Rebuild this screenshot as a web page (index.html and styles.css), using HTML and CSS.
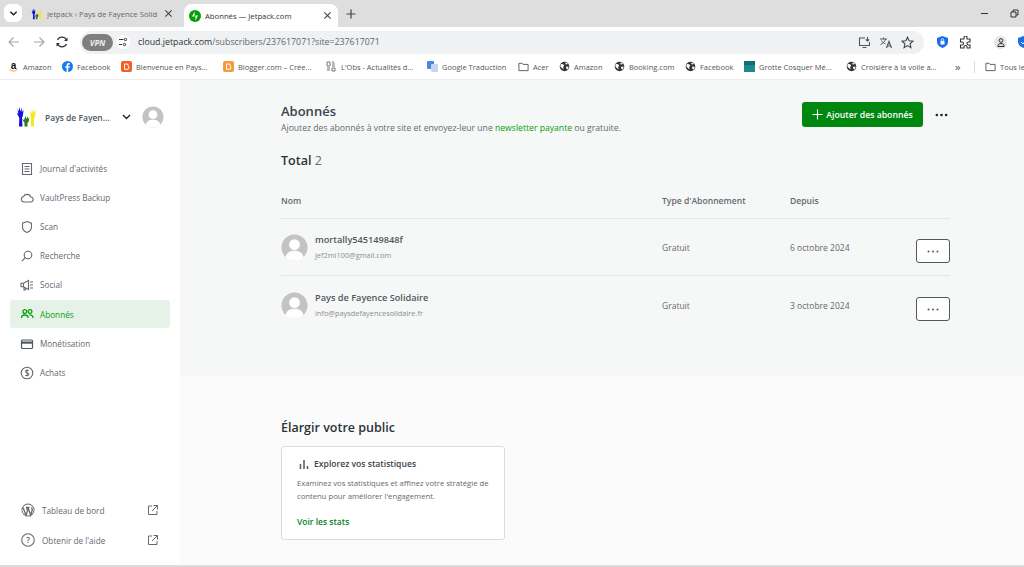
FILE: index.html
```html
<!DOCTYPE html>
<html lang="fr">
<head>
<meta charset="utf-8">
<title>Abonnés — Jetpack.com</title>
<link rel="stylesheet" href="styles.css">
</head>
<body>
<svg class="defs" width="0" height="0" aria-hidden="true">
  <symbol id="globe" viewBox="0 0 12 12"><circle cx="6" cy="6" r="5.2" fill="#333"/><path d="M2 3.2l2.6.4 1.2 1.6-1.4 1.4.8 2.6L3.4 8 1.4 6zM7 1.5l2.6 1-1 1.4-1.6-.4zM8 6l2.6.2-1.2 3L7.6 8z" fill="#fff"/></symbol>
  <symbol id="folder" viewBox="0 0 12 12"><path d="M1 2.5h3.5l1 1.2H11V10.5H1z" fill="none" stroke="#555" stroke-width="1"/></symbol>
  <symbol id="ext" viewBox="0 0 12 12"><path d="M5 2H1.500v8.500H10V7M6.500 1.500H10.500V5.500M10.500 1.500L5 7" fill="none" stroke="#646970" stroke-width="1"/></symbol>
  <symbol id="avatar" viewBox="0 0 28 28"><circle cx="14" cy="14" r="13.5" fill="#c3c3c3"/><circle cx="14" cy="11" r="5.6" fill="#fff"/><path d="M4.5 24c1.500-5 5-6.600 9.500-6.600S22 19 23.500 24A13.500 13.500 0 0 1 14 27.500 13.500 13.500 0 0 1 4.500 24z" fill="#fff"/></symbol>
  <symbol id="x" viewBox="0 0 10 10"><path d="M1.500 1.500l7 7M8.500 1.500l-7 7" stroke="#444" stroke-width="1.200" fill="none"/></symbol>
  <symbol id="hands" viewBox="0 0 22 20"><path d="M2 1l1.200 3.500L4 0l1 4.500L6.500.5 6.200 5 8 3 7.500 8 6.500 11 7 19.500H3.500L3.800 11 1 5.500 2.800 7z" fill="#1010e0"/><path d="M10 9l1 3 1-3 .5 3 1.200-2-.2 4-1.500 2v3.500h-3V16l-2.500-4 2 1z" fill="#2f7d1e"/><path d="M16.500 2l.5 4L18 1.500 18.500 6 20.500 3l-1 6-1 3V19.500H15.500V12l-.5-4-1-3 1.500 2z" fill="#f2ea1e"/></symbol>
</svg>

<header class="chrome">
  <div class="tabstrip">
    <button class="tab-search"><svg viewBox="0 0 10 10" width="9" height="9"><path d="M1.500 3l3.500 3.500L8.500 3" fill="none" stroke="#222" stroke-width="1.500"/></svg></button>
    <div class="tab">
      <svg class="tab-icon" width="12" height="12"><use href="#hands"/></svg>
      <span class="tab-title">Jetpack ‹ Pays de Fayence Solid</span>
      <svg class="tab-x" width="9" height="9"><use href="#x"/></svg>
    </div>
    <div class="tab tab-active">
      <svg class="tab-icon" width="12" height="12" viewBox="0 0 12 12"><circle cx="6" cy="6" r="6" fill="#069e08"/><path d="M5.600 1.500v5H3zM6.400 10.500v-5H9z" fill="#fff"/></svg>
      <span class="tab-title">Abonnés — Jetpack.com</span>
      <svg class="tab-x" width="9" height="9"><use href="#x"/></svg>
    </div>
    <svg class="tab-new" width="10" height="10" viewBox="0 0 10 10"><path d="M5 .5v9M.5 5h9" stroke="#444" stroke-width="1.200"/></svg>
    <div class="win-controls">
      <span class="win-min"></span>
      <svg width="9" height="9" viewBox="0 0 9 9"><path d="M1 3h5v5H1zM3 3V1h5v5H6" fill="none" stroke="#333"/></svg>
    </div>
  </div>
  <div class="toolbar">
    <svg class="nav-icon" width="12" height="12" viewBox="0 0 12 12"><path d="M11 6H1.500M5.500 1.500L1 6l4.500 4.500" fill="none" stroke="#a5a5a5" stroke-width="1.100"/></svg>
    <svg class="nav-icon" width="12" height="12" viewBox="0 0 12 12"><path d="M1 6h9.500M6.500 1.500L11 6l-4.500 4.500" fill="none" stroke="#a5a5a5" stroke-width="1.100"/></svg>
    <svg class="nav-icon" width="12" height="12" viewBox="0 0 12 12"><path d="M10.500 4A5 5 0 0 0 1.500 4M1.500 8a5 5 0 0 0 9 0" fill="none" stroke="#333" stroke-width="1.200"/><path d="M11.500 1.500V5H8zM.5 10.500V7H4z" fill="#333"/></svg>
    <div class="omnibox">
      <span class="vpn">VPN</span>
      <span class="site-info"><svg width="10" height="10" viewBox="0 0 10 10"><path d="M1 2.500h4.500M1 7.500h3" stroke="#333"/><circle cx="7.500" cy="2.500" r="1.200" fill="none" stroke="#333"/><circle cx="6.500" cy="7.500" r="1.200" fill="none" stroke="#333"/></svg></span>
      <span class="url"><b>cloud.jetpack.com</b>/subscribers/237617071?site=237617071</span>
      <div class="omni-icons">
        <svg width="13" height="13" viewBox="0 0 13 13"><path d="M7 2H1.500v7.500h10V6M4.500 11.500h4M9.500 1v4M7.800 3.500L9.500 5l1.700-1.500" fill="none" stroke="#555" stroke-width="1.100"/></svg>
        <svg width="14" height="13" viewBox="0 0 14 13"><path d="M1 3h7M4.500 1.500V3M6.500 3C6 5.500 4 7.500 1.500 8.500M2.500 4.500C3.500 6.500 5 7.500 6.500 8" fill="none" stroke="#555"/><path d="M7.500 12l2.500-6.500L12.500 12M8.400 10h3.200" fill="none" stroke="#555" stroke-width="1.200"/></svg>
        <svg width="13" height="13" viewBox="0 0 13 13"><path d="M6.500 1.200l1.600 3.600 3.900.4-2.900 2.600.8 3.800-3.400-2-3.400 2 .8-3.800L1 5.200l3.900-.4z" fill="none" stroke="#444" stroke-width="1.100"/></svg>
      </div>
    </div>
    <svg class="ext-shield" width="11" height="12" viewBox="0 0 11 12"><path d="M5.500 0L11 2v4c0 3-2.500 5-5.500 6C2.500 11 0 9 0 6V2z" fill="#1a6fe8"/><rect x="3.500" y="5" width="4" height="3.500" fill="#fff"/><path d="M4.300 5V3.800a1.200 1.200 0 0 1 2.400 0V5" fill="none" stroke="#fff" stroke-width=".8"/></svg>
    <svg class="ext-puzzle" width="13" height="13" viewBox="0 0 13 13"><path d="M5 1.500a1.500 1.500 0 0 1 3 0V3h3v3H9.500a1.500 1.500 0 0 0 0 3H11v3H8v-1a1.500 1.500 0 0 0-3 0v1H1.500V9H3a1.500 1.500 0 0 0 0-3H1.500V3H5z" fill="none" stroke="#333" stroke-width="1.100"/></svg>
    <span class="tool-sep"></span>
    <span class="profile"><svg width="8" height="9" viewBox="0 0 8 9"><circle cx="4" cy="2.500" r="1.800" fill="none" stroke="#333"/><path d="M.8 8.500c0-4 6.400-4 6.400 0z" fill="none" stroke="#333"/></svg></span>
    <svg class="ext-last" width="11" height="12" viewBox="0 0 11 12"><path d="M5.500 0L11 2v4c0 3-2.500 5-5.500 6C2.500 11 0 9 0 6V2z" fill="#1a6fe8"/><path d="M3 6l2 2 3-4" stroke="#fff" fill="none"/></svg>
  </div>
  <nav class="bookmarks">
    <span class="bm bm-amazon"><svg width="11" height="11" viewBox="0 0 11 11"><text x="5.500" y="8" text-anchor="middle" class="amazon-a">a</text><path d="M1.500 8.500c2.500 2 5.500 2 8 0" stroke="#f90" fill="none"/></svg>Amazon</span>
    <span class="bm bm-fb"><svg width="11" height="11" viewBox="0 0 11 11"><circle cx="5.500" cy="5.500" r="5.500" fill="#1877f2"/><path d="M6.200 11V6.800h1.400l.3-1.600H6.200V4.300c0-.6.300-.9.900-.9h.8V2c-1.700-.3-3.300.1-3.300 2.100v1.100H3.300v1.600h1.300V11z" fill="#fff"/></svg>Facebook</span>
    <span class="bm bm-blog"><svg width="11" height="11" viewBox="0 0 11 11"><rect width="11" height="11" rx="2" fill="#f4601e"/><path d="M3.500 3h2.500a1.200 1.200 0 0 1 1.200 1.500v1h.5v2A.8.8 0 0 1 7 8.300H3.500z" fill="none" stroke="#fff"/></svg>Bienvenue en Pays...</span>
    <span class="bm bm-blogger"><svg width="11" height="11" viewBox="0 0 11 11"><rect width="11" height="11" rx="2" fill="#f59a3b"/><path d="M3.500 3h2.500a1.200 1.200 0 0 1 1.200 1.500v1h.5v2A.8.8 0 0 1 7 8.300H3.500z" fill="none" stroke="#fff"/></svg>Blogger.com – Crée...</span>
    <span class="bm bm-obs"><svg width="11" height="11" viewBox="0 0 11 11"><path d="M1 1h3v4H1zM6 1h2M6 3h3M6 5h3M1 7h3M1 9h3M6 7h3v3H6z" fill="none" stroke="#777"/></svg>L'Obs - Actualités d...</span>
    <span class="bm bm-gt"><svg width="11" height="11" viewBox="0 0 11 11"><rect y="0" width="7" height="8" rx="1" fill="#4a86e8"/><rect x="4" y="3" width="7" height="8" rx="1" fill="#c6d6f2"/></svg>Google Traduction</span>
    <span class="bm bm-acer"><svg width="11" height="11"><use href="#folder"/></svg>Acer</span>
    <span class="bm bm-am2"><svg width="11" height="11"><use href="#globe"/></svg>Amazon</span>
    <span class="bm bm-bk"><svg width="11" height="11"><use href="#globe"/></svg>Booking.com</span>
    <span class="bm bm-fb2"><svg width="11" height="11"><use href="#globe"/></svg>Facebook</span>
    <span class="bm bm-grotte"><svg width="11" height="11" viewBox="0 0 11 11"><rect width="11" height="11" fill="#1e8a90"/><rect width="11" height="4" fill="#0f6f74"/></svg>Grotte Cosquer Mé...</span>
    <span class="bm bm-cr"><svg width="11" height="11"><use href="#globe"/></svg>Croisière à la voile a...</span>
    <span class="bm-more">»</span>
    <span class="bm-sep"></span>
    <span class="bm bm-all"><svg width="11" height="11"><use href="#folder"/></svg>Tous les favoris</span>
  </nav>
</header>

<div class="app">
  <aside class="sidebar">
    <div class="site-head">
      <svg class="site-logo" width="23" height="20"><use href="#hands"/></svg>
      <span class="site-name">Pays de Fayen...</span>
      <svg class="site-chev" width="9" height="6" viewBox="0 0 9 6"><path d="M1 1l3.500 3.500L8 1" fill="none" stroke="#222" stroke-width="1.400"/></svg>
      <svg width="22" height="22"><use href="#avatar"/></svg>
    </div>
    <ul class="menu">
      <li class="menu-item"><svg class="mi" viewBox="0 0 14 14"><path d="M2.500 1.500h9v11h-9zM4.500 4.500h5M4.500 7h5M4.500 9.500h5" fill="none" stroke="#646970" stroke-width="1.100"/></svg>Journal d'activités</li>
      <li class="menu-item"><svg class="mi" viewBox="0 0 14 14"><path d="M4 11h6.500a2.500 2.500 0 0 0 .3-5A4 4 0 0 0 3.500 5.500 2.800 2.800 0 0 0 4 11z" fill="none" stroke="#646970" stroke-width="1.100"/></svg>VaultPress Backup</li>
      <li class="menu-item"><svg class="mi" viewBox="0 0 14 14"><path d="M7 1.500l4.500 1.700v3.800c0 2.800-2 4.500-4.500 5.500-2.500-1-4.500-2.700-4.500-5.500V3.200z" fill="none" stroke="#646970" stroke-width="1.100"/></svg>Scan</li>
      <li class="menu-item"><svg class="mi" viewBox="0 0 14 14"><circle cx="8" cy="6" r="3.800" fill="none" stroke="#646970" stroke-width="1.100"/><path d="M5.300 8.700L2 12" stroke="#646970" stroke-width="1.100"/></svg>Recherche</li>
      <li class="menu-item"><svg class="mi" viewBox="0 0 14 14"><path d="M1 5.200h2.500L8.500 2.500v9L3.500 8.800H1zM3.500 5.200v3.600M4 9v3h1.500V9.600M10 4h3M10 7h3M10 10h3" fill="none" stroke="#646970" stroke-width="1.100"/></svg>Social</li>
      <li class="menu-item menu-active"><svg class="mi" viewBox="0 0 14 14"><circle cx="4.800" cy="4.500" r="1.900" fill="none" stroke="#069e08" stroke-width="1.300"/><circle cx="10" cy="4.500" r="1.900" fill="none" stroke="#069e08" stroke-width="1.300"/><path d="M1.500 11c0-4 6.600-4 6.600 0M9.500 8c2-.3 3.500.8 3.500 3" fill="none" stroke="#069e08" stroke-width="1.300"/></svg>Abonnés</li>
      <li class="menu-item"><svg class="mi" viewBox="0 0 14 14"><rect x="1.500" y="3" width="11" height="8.500" rx="1" fill="none" stroke="#50575e" stroke-width="1.200"/><rect x="1.500" y="4.500" width="11" height="2.200" fill="#50575e"/></svg>Monétisation</li>
      <li class="menu-item"><svg class="mi" viewBox="0 0 14 14"><circle cx="7" cy="7" r="5.800" fill="none" stroke="#646970" stroke-width="1.100"/><text x="7" y="9.800" text-anchor="middle" class="dollar">$</text></svg>Achats</li>
    </ul>
    <div class="side-foot">
      <div class="foot-item"><svg class="fi" viewBox="0 0 14 14"><circle cx="7" cy="7" r="6.500" fill="#646970"/><circle cx="7" cy="7" r="5.600" fill="#fff"/><path d="M2 4.500L5 12.300 6.600 7.800 5.500 4.500M5 4.500h3.500M7 4.500l2.700 7.800 1.500-5c.3-1.200-.2-2-.8-2.800" fill="none" stroke="#646970" stroke-width="1.300"/></svg><span class="foot-label">Tableau de bord</span><svg class="fe"><use href="#ext"/></svg></div>
      <div class="foot-item"><svg class="fi" viewBox="0 0 14 14"><circle cx="7" cy="7" r="6.300" fill="none" stroke="#646970" stroke-width="1.100"/><text x="7" y="10" text-anchor="middle" class="qm">?</text></svg><span class="foot-label">Obtenir de l'aide</span><svg class="fe"><use href="#ext"/></svg></div>
    </div>
  </aside>

  <main class="content">
    <section class="panel">
      <div class="panel-inner">
        <div class="page-head">
          <div>
            <h1 class="page-title">Abonnés</h1>
            <p class="page-sub">Ajoutez des abonnés à votre site et envoyez-leur une <a class="link">newsletter payante</a> ou gratuite.</p>
          </div>
          <div class="head-actions">
            <button class="btn-add"><svg width="11" height="11" viewBox="0 0 11 11"><path d="M5.500 .5v10M.5 5.500h10" stroke="#fff" stroke-width="1.100"/></svg>Ajouter des abonnés</button>
            <svg class="head-more" width="13" height="4" viewBox="0 0 14 4"><circle cx="2" cy="2" r="1.400" fill="#1d2327"/><circle cx="7" cy="2" r="1.400" fill="#1d2327"/><circle cx="12" cy="2" r="1.400" fill="#1d2327"/></svg>
          </div>
        </div>
        <h2 class="total">Total <span class="total-n">2</span></h2>
        <div class="row row-head">
          <span class="c-name">Nom</span><span class="c-type">Type d'Abonnement</span><span class="c-since">Depuis</span>
        </div>
        <div class="row row-sub">
          <div class="c-name sub-id">
            <svg width="27" height="27"><use href="#avatar"/></svg>
            <div><div class="sub-name">mortally545149848f</div><div class="sub-mail">jef2mi100@gmail.com</div></div>
          </div>
          <span class="c-type">Gratuit</span><span class="c-since">6 octobre 2024</span>
          <button class="btn-more"><svg width="12" height="3" viewBox="0 0 12 3"><circle cx="1.500" cy="1.500" r="1" fill="#50575e"/><circle cx="6" cy="1.500" r="1" fill="#50575e"/><circle cx="10.500" cy="1.500" r="1" fill="#50575e"/></svg></button>
        </div>
        <div class="row row-sub row-last">
          <div class="c-name sub-id">
            <svg width="27" height="27"><use href="#avatar"/></svg>
            <div><div class="sub-name">Pays de Fayence Solidaire</div><div class="sub-mail">info@paysdefayencesolidaire.fr</div></div>
          </div>
          <span class="c-type">Gratuit</span><span class="c-since">3 octobre 2024</span>
          <button class="btn-more"><svg width="12" height="3" viewBox="0 0 12 3"><circle cx="1.500" cy="1.500" r="1" fill="#50575e"/><circle cx="6" cy="1.500" r="1" fill="#50575e"/><circle cx="10.500" cy="1.500" r="1" fill="#50575e"/></svg></button>
        </div>
      </div>
    </section>
    <section class="grow">
      <h2 class="grow-title">Élargir votre public</h2>
      <div class="card">
        <div class="card-head"><svg width="12" height="12" viewBox="0 0 12 12"><path d="M2.500 6v5M6 2v9M9.500 8v3" stroke="#50575e" stroke-width="1.500"/></svg><span>Explorez vos statistiques</span></div>
        <p class="card-text">Examinez vos statistiques et affinez votre stratégie de contenu pour améliorer l'engagement.</p>
        <a class="card-link">Voir les stats</a>
      </div>
    </section>
  </main>
</div>
</body>
</html>
```
FILE: styles.css
```css
* { box-sizing: border-box; }
html, body { margin: 0; padding: 0; }
body { width: 1024px; height: 567px; overflow: hidden; background: #fff; font-family: "Open Sans", "Noto Sans", sans-serif; color: #50575e; display: flex; flex-direction: column; }
.defs { position: absolute; }
button { font-family: inherit; border: 0; padding: 0; background: none; }
svg { display: block; flex: none; }

.chrome { flex: none; height: 80px; background: #fff; }
.tabstrip { height: 27px; background: #dedede; display: flex; align-items: flex-end; padding-left: 4px; }
.tab-search { width: 18px; height: 18px; margin-bottom: 5px; background: #fff; border-radius: 6px; display: flex; align-items: center; justify-content: center; }
.tab { width: 162px; height: 23px; display: flex; align-items: center; padding: 0 2px 4px 9px; font-size: 7.700px; color: #666; }
.tab-active { width: 154px; background: #fff; border-radius: 8px 8px 0 0; padding: 0 6px 0 5px; color: #333; }
.tab-icon { margin-right: 4px; }
.tab-title { flex: 1; overflow: hidden; white-space: nowrap; }
.tab-x { margin-left: 4px; }
.tab:first-of-type .tab-x { margin-right: 9px; }
.tab-new { margin: 0 0 8px 8px; }
.win-controls { margin: 0 0 9px auto; display: flex; align-items: center; width: 43px; gap: 22px; }
.win-min { width: 7px; height: 1px; background: #333; }

.toolbar { height: 28px; display: flex; align-items: center; padding: 2px 0 0 8px; }
.nav-icon { margin-right: 13px; }
.nav-icon:nth-of-type(2) { margin-right: 11px; }
.nav-icon:nth-of-type(3) { margin-right: 12px; }
.omnibox { width: 844px; flex: none; height: 23px; background: #eff1f3; border-radius: 12px; display: flex; align-items: center; padding: 0 10px 0 2px; font-size: 8.800px; color: #666; }
.vpn { width: 31px; height: 17px; border-radius: 9px; background: #7f7f7f; color: #eee; font-size: 8px; font-weight: 700; font-style: italic; display: flex; align-items: center; justify-content: center; }
.site-info { width: 14px; height: 14px; margin-left: 3px; border-radius: 50%; background: #fff; display: flex; align-items: center; justify-content: center; }
.url { margin-left: 8px; }
.url b { font-weight: 400; color: #333; }
.omni-icons { margin-left: auto; display: flex; gap: 8px; align-items: center; }
.ext-shield { margin-left: 13px; }
.ext-puzzle { margin-left: 11px; }
.tool-sep { width: 1px; height: 10px; background: #dedede; margin: 0 11px; }
.profile { width: 13px; height: 13px; border-radius: 50%; background: #e3e3e3; display: flex; align-items: center; justify-content: center; flex: none; }
.ext-last { margin-left: 11px; }

.bookmarks { height: 25px; display: flex; align-items: center; padding: 0 0 1px 8px; font-size: 7.500px; color: #555; white-space: nowrap; border-bottom: 1px solid #eee; overflow: hidden; }
.bm { display: flex; align-items: center; gap: 4px; flex: none; }
.bm-amazon { width: 54px; }
.bm-fb { width: 59px; }
.bm-blog { width: 102px; }
.bm-blogger { width: 103px; }
.bm-obs { width: 101px; }
.bm-gt { width: 91px; }
.bm-acer { width: 41px; }
.bm-am2 { width: 55px; }
.bm-bk { width: 71px; }
.bm-fb2 { width: 59px; }
.bm-grotte { width: 102px; }
.bm-cr { width: 109px; }
.bm-more { width: 19px; font-size: 11px; flex: none; }
.bm-sep { width: 1px; height: 12px; background: #dedede; margin-right: 10px; flex: none; }
.amazon-a { font-size: 10px; font-weight: 700; fill: #111; font-family: "Liberation Sans", sans-serif; }

.app { flex: 1; display: flex; min-height: 0; border-bottom: 2px solid #dcdcde; }
.sidebar { width: 180px; flex: none; display: flex; flex-direction: column; background: #fff; padding: 0 10px; }
.site-head { display: flex; align-items: center; height: 22px; margin-top: 26px; padding: 0 6px 0 5px; font-size: 8.500px; font-weight: 600; color: #50575e; }
.site-logo { margin-right: 7px; }
.site-name { flex: 1; white-space: nowrap; }
.site-chev { margin-right: 11px; }
.menu { list-style: none; margin: 26px 0 0; padding: 0; font-size: 8.200px; }
.menu-item { height: 29px; display: flex; align-items: center; padding-left: 10px; border-radius: 3px; color: #646970; }
.mi { width: 14px; height: 14px; margin-right: 6px; }
.menu-active { background: #e6f2e8; color: #069e08; height: 28px; margin: 1px 0; }
.side-foot { margin-top: auto; padding-bottom: 10px; font-size: 8.200px; }
.foot-item { height: 30px; display: flex; align-items: center; padding-left: 11px; color: #646970; }
.fi { width: 14px; height: 14px; margin-right: 7px; }
.fe { width: 12px; height: 12px; margin-left: auto; margin-right: 11px; }
.foot-label { flex: 1; }
.dollar, .qm { font-size: 8px; fill: #50575e; font-family: "Open Sans", sans-serif; font-weight: 600; }

.content { flex: 1; display: flex; flex-direction: column; background: #fbfbfb; min-width: 0; }
.panel { background: #f6f7f7; height: 296px; flex: none; padding: 22px 74px 0 101px; }
.page-head { display: flex; justify-content: space-between; align-items: flex-start; }
.page-title { margin: 0; font-size: 13px; line-height: 18px; font-weight: 600; color: #3c434a; }
.page-sub { margin: 1px 0 0; font-size: 8.630px; line-height: 14px; color: #646970; }
.link { color: #069e08; }
.head-actions { display: flex; align-items: center; gap: 12px; margin-right: 2px; }
.btn-add { width: 121px; height: 25px; border-radius: 3px; background: #008710; color: #fff; font-size: 8.700px; font-weight: 600; display: flex; align-items: center; justify-content: center; gap: 3px; }
.total { margin: 17px 0 0; font-size: 12.500px; line-height: 18px; font-weight: 600; color: #2c3338; }
.total-n { font-weight: 400; color: #646970; }
.row { display: flex; align-items: center; font-size: 8.500px; color: #646970; border-bottom: 1px solid #e4e6e8; }
.row-head { height: 37px; margin-top: 12px; padding-top: 2px; font-weight: 600; font-size: 8.600px; }
.row-sub { height: 57px; }
.row-last { border-bottom: 0; height: 58px; }
.c-name { width: 381px; flex: none; }
.c-type { width: 128px; flex: none; }
.c-since { flex: 1; }
.sub-id { display: flex; align-items: center; gap: 7px; }
.sub-name { font-size: 9.200px; line-height: 14px; font-weight: 600; color: #50575e; }
.sub-mail { font-size: 7.400px; line-height: 14px; margin-top: 1px; color: #8c8f94; }
.btn-more { width: 34px; height: 24px; border: 1px solid #50575e; border-radius: 3px; background: #fff; display: flex; align-items: center; justify-content: center; margin-top: 8px; }
.grow { flex: 1; padding: 43px 0 0 101px; }
.grow-title { margin: 0; font-size: 12.500px; line-height: 18px; font-weight: 600; color: #2c3338; }
.card { width: 224px; height: 94px; margin-top: 9px; background: #fff; border: 1px solid #dcdcde; border-radius: 3px; padding: 11px 8px 11px 15px; }
.card-head { display: flex; align-items: center; gap: 4px; font-size: 8.600px; font-weight: 600; color: #3c434a; padding-left: 1px; }
.card-text { margin: 7px 0 0; font-size: 7.700px; line-height: 13px; color: #646970; }
.card-link { display: block; margin-top: 13px; font-size: 8.500px; font-weight: 600; color: #00801f; }
```
